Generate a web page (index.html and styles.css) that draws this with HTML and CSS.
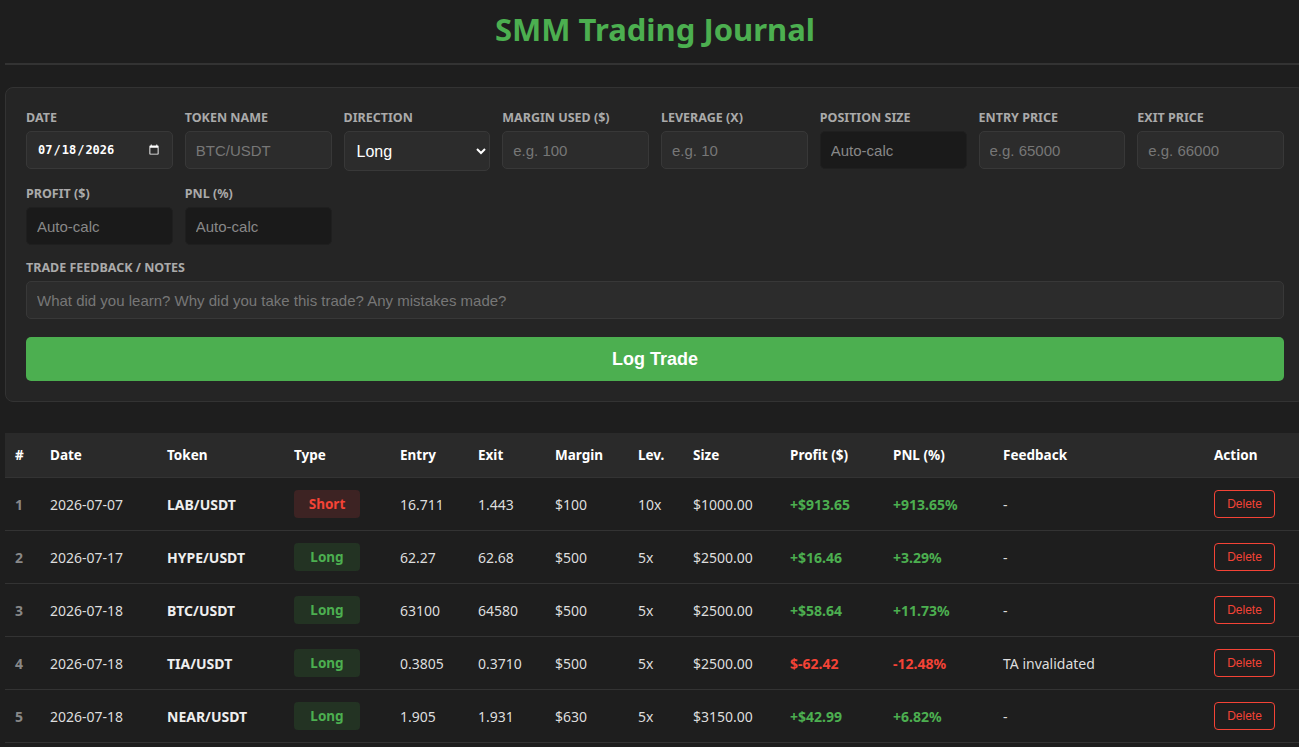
FILE: index.html
```html
<!DOCTYPE html>
<html lang="en">
  <head>
    <meta charset="UTF-8" />
    <meta name="viewport" content="width=device-width, initial-scale=1" />
    <title>SMM Trading Journal</title>
    <link rel="stylesheet" href="styles.css">
  </head>
  <body>
    <div class="page">
      <h1>SMM Trading Journal</h1>
      <hr />

      <form class="card" onsubmit="return false">
        <div class="grid">
          <div class="field">
            <label>Date</label>
            <input type="date" value="2026-07-18" />
          </div>
          <div class="field">
            <label>Token Name</label>
            <input type="text" placeholder="BTC/USDT" />
          </div>
          <div class="field">
            <label>Direction</label>
            <select>
              <option>Long</option>
              <option>Short</option>
            </select>
          </div>
          <div class="field">
            <label>Margin Used ($)</label>
            <input type="number" placeholder="e.g. 100" />
          </div>
          <div class="field">
            <label>Leverage (X)</label>
            <input type="number" placeholder="e.g. 10" />
          </div>
          <div class="field">
            <label>Position Size</label>
            <input class="calc" type="text" placeholder="Auto-calc" readonly />
          </div>
          <div class="field">
            <label>Entry Price</label>
            <input type="number" placeholder="e.g. 65000" />
          </div>
          <div class="field">
            <label>Exit Price</label>
            <input type="number" placeholder="e.g. 66000" />
          </div>
          <div class="field">
            <label>Profit ($)</label>
            <input class="calc" type="text" placeholder="Auto-calc" readonly />
          </div>
          <div class="field">
            <label>PNL (%)</label>
            <input class="calc" type="text" placeholder="Auto-calc" readonly />
          </div>
        </div>

        <div class="field notes">
          <label>Trade Feedback / Notes</label>
          <input type="text" placeholder="What did you learn? Why did you take this trade? Any mistakes made?" />
        </div>

        <button class="log-btn">Log Trade</button>
      </form>

      <table>
        <colgroup>
          <col style="width:35px" />
          <col style="width:117px" />
          <col style="width:127px" />
          <col style="width:106px" />
          <col style="width:78px" />
          <col style="width:77px" />
          <col style="width:83px" />
          <col style="width:55px" />
          <col style="width:97px" />
          <col style="width:103px" />
          <col style="width:110px" />
          <col style="width:211px" />
          <col style="width:101px" />
        </colgroup>
        <thead>
          <tr>
            <th>#</th>
            <th>Date</th>
            <th>Token</th>
            <th>Type</th>
            <th>Entry</th>
            <th>Exit</th>
            <th>Margin</th>
            <th>Lev.</th>
            <th>Size</th>
            <th>Profit ($)</th>
            <th>PNL (%)</th>
            <th>Feedback</th>
            <th>Action</th>
          </tr>
        </thead>
        <tbody>
          <tr>
            <td class="num">1</td>
            <td>2026-07-07</td>
            <td class="token">LAB/USDT</td>
            <td><span class="badge short">Short</span></td>
            <td>16.711</td>
            <td>1.443</td>
            <td>$100</td>
            <td>10x</td>
            <td>$1000.00</td>
            <td class="win">+$913.65</td>
            <td class="win">+913.65%</td>
            <td>-</td>
            <td><button class="del">Delete</button></td>
          </tr>
          <tr>
            <td class="num">2</td>
            <td>2026-07-17</td>
            <td class="token">HYPE/USDT</td>
            <td><span class="badge long">Long</span></td>
            <td>62.27</td>
            <td>62.68</td>
            <td>$500</td>
            <td>5x</td>
            <td>$2500.00</td>
            <td class="win">+$16.46</td>
            <td class="win">+3.29%</td>
            <td>-</td>
            <td><button class="del">Delete</button></td>
          </tr>
          <tr>
            <td class="num">3</td>
            <td>2026-07-18</td>
            <td class="token">BTC/USDT</td>
            <td><span class="badge long">Long</span></td>
            <td>63100</td>
            <td>64580</td>
            <td>$500</td>
            <td>5x</td>
            <td>$2500.00</td>
            <td class="win">+$58.64</td>
            <td class="win">+11.73%</td>
            <td>-</td>
            <td><button class="del">Delete</button></td>
          </tr>
          <tr>
            <td class="num">4</td>
            <td>2026-07-18</td>
            <td class="token">TIA/USDT</td>
            <td><span class="badge long">Long</span></td>
            <td>0.3805</td>
            <td>0.3710</td>
            <td>$500</td>
            <td>5x</td>
            <td>$2500.00</td>
            <td class="loss">$-62.42</td>
            <td class="loss">-12.48%</td>
            <td>TA invalidated</td>
            <td><button class="del">Delete</button></td>
          </tr>
          <tr>
            <td class="num">5</td>
            <td>2026-07-18</td>
            <td class="token">NEAR/USDT</td>
            <td><span class="badge long">Long</span></td>
            <td>1.905</td>
            <td>1.931</td>
            <td>$630</td>
            <td>5x</td>
            <td>$3150.00</td>
            <td class="win">+$42.99</td>
            <td class="win">+6.82%</td>
            <td>-</td>
            <td><button class="del">Delete</button></td>
          </tr>
        </tbody>
      </table>
    </div>
  </body>
</html>
```

FILE: styles.css
```css
body {
  font-family: "Noto Sans", sans-serif;
  margin: 0;
  padding: 0;
  background: #1e1e1e;
  color: #e0e0e0;
  overflow: hidden;
}

.page {
  width: 1300px;
  margin-left: 5px;
}

h1 {
  color: #4caf50;
  text-align: center;
  font-size: 31px;
  margin: 0;
  padding: 8px 0 13px;
  line-height: 42px;
}

hr {
  border: none;
  border-top: 2px solid #333;
  margin: 0 0 22px;
}

.card {
  background: #252525;
  border: 1px solid #333;
  border-radius: 8px;
  padding: 19px 20px 20px;
  margin-bottom: 31px;
}

.grid {
  display: grid;
  grid-template-columns: repeat(8, 1fr);
  column-gap: 12px;
  row-gap: 12px;
}

.field {
  display: flex;
  flex-direction: column;
  gap: 5px;
}

.field label {
  font-size: 12.5px;
  font-weight: bold;
  text-transform: uppercase;
  color: #aaa;
  line-height: 17px;
  padding-top: 2px;
}

input,
select {
  box-sizing: border-box;
  height: 38px;
  width: 100%;
  background: #2c2c2c;
  border: 1px solid #383838;
  border-radius: 5px;
  color: #fff;
  font-family: "Liberation Sans", Arial, sans-serif;
  font-size: 15px;
  padding: 0 10px;
  color-scheme: dark;
}

input::placeholder {
  color: #777;
}

input.calc {
  background: #1a1a1a;
  border-color: #1f1f1f;
}

input.calc::placeholder {
  color: #888;
}

input[type="date"] {
  font-family: "DejaVu Sans Mono", monospace;
  font-size: 12px;
  font-weight: bold;
}

select {
  height: 40px;
  font-size: 16px;
  padding: 0 8px;
}

.notes {
  margin-top: 12px;
}

.log-btn {
  display: block;
  width: 100%;
  height: 44px;
  margin-top: 18px;
  background: #4caf50;
  color: white;
  border: none;
  border-radius: 5px;
  font-family: "Liberation Sans", Arial, sans-serif;
  font-size: 18px;
  font-weight: bold;
  cursor: pointer;
}

table {
  width: 1300px;
  table-layout: fixed;
  border-collapse: collapse;
  font-size: 14px;
}

th {
  background: #2a2a2a;
  color: #fff;
  text-align: left;
  font-weight: bold;
  font-size: 13.5px;
  height: 44px;
  padding: 0 10px;
  border-bottom: 1px solid #333;
}

td {
  height: 52px;
  padding: 0 10px;
  border-bottom: 1px solid #333;
  color: #ddd;
  white-space: nowrap;
}

td.num {
  color: #888;
  font-weight: bold;
}

td.token {
  font-weight: bold;
  color: #eee;
}

td.win {
  color: #4caf50;
  font-weight: bold;
}

td.loss {
  color: #f44336;
  font-weight: bold;
}

.badge {
  display: inline-block;
  width: 66px;
  height: 28px;
  line-height: 28px;
  text-align: center;
  border-radius: 4px;
  font-weight: bold;
  font-size: 13.5px;
}

.badge.long {
  background: #233323;
  color: #4caf50;
}

.badge.short {
  background: #3d2323;
  color: #f44336;
}

.del {
  background: transparent;
  border: 1px solid #f44336;
  color: #f44336;
  border-radius: 4px;
  width: 61px;
  height: 28px;
  font-family: "Liberation Sans", Arial, sans-serif;
  font-size: 12px;
  cursor: pointer;
  padding: 0;
}
```
